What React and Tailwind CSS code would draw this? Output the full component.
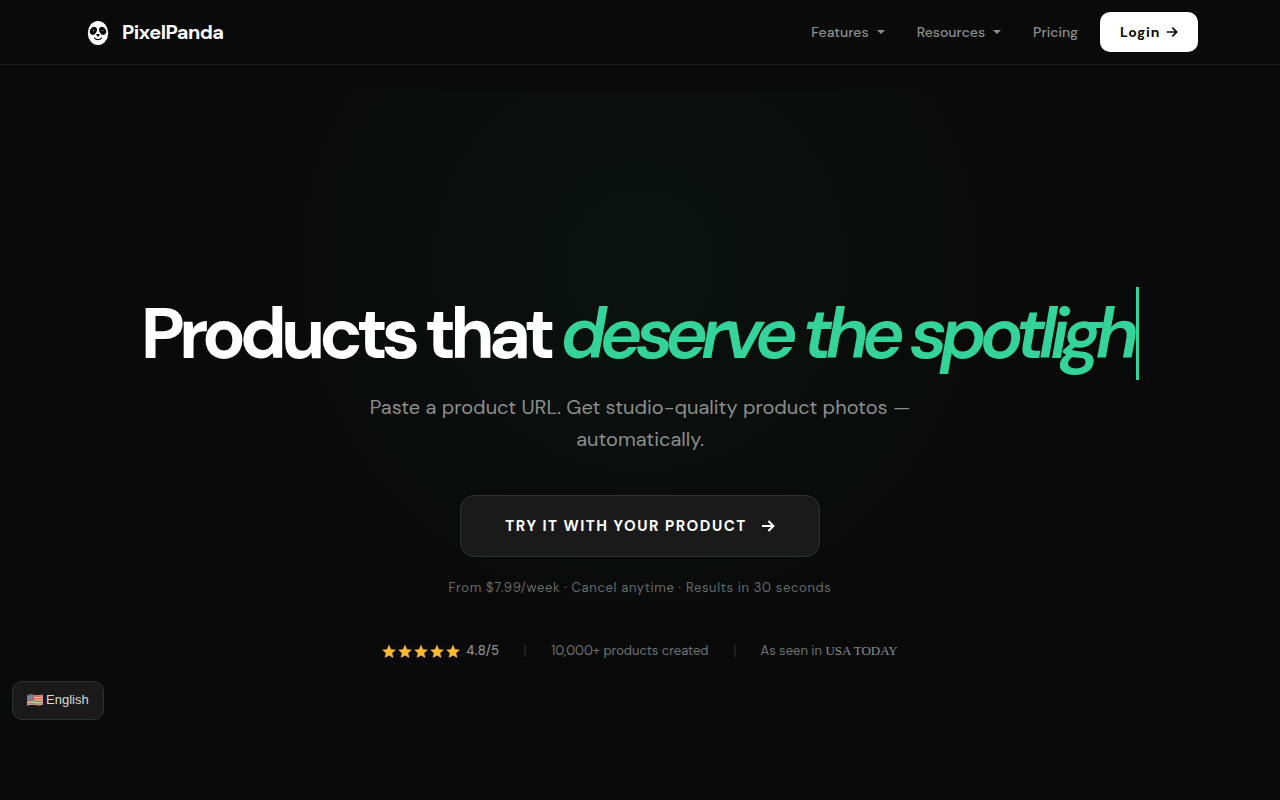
import React from 'react';

const navLinks = [
  { label: 'Features', menu: true },
  { label: 'Resources', menu: true },
  { label: 'Pricing', menu: false },
];

const PandaLogo = () => (
  <svg width="24" height="26" viewBox="0 0 24 26" aria-hidden="true">
    <ellipse cx="12" cy="14" rx="10.2" ry="12" fill="#fff" />
    <ellipse cx="7.4" cy="11.8" rx="3.3" ry="4.2" fill="#0a0a0a" transform="rotate(28 7.4 11.8)" />
    <ellipse cx="16.6" cy="11.8" rx="3.3" ry="4.2" fill="#0a0a0a" transform="rotate(-28 16.6 11.8)" />
    <circle cx="7.4" cy="11.4" r="0.5" fill="#fff" />
    <circle cx="16.8" cy="11.4" r="0.5" fill="#fff" />
    <path d="M10 15h4l-1.3 2.4h-1.4z" fill="#0a0a0a" />
    <path d="M8.4 19c1.6 2.2 5.6 2.2 7.2 0" stroke="#0a0a0a" strokeWidth="1.2" fill="none" strokeLinecap="round" />
  </svg>
);

const Caret = () => (
  <svg width="8" height="4" viewBox="0 0 8 4" fill="currentColor" aria-hidden="true">
    <path d="M0 0h8L4 4z" />
  </svg>
);

const Arrow = ({ size, weight }) => (
  <svg width={size} height={size} viewBox="0 0 14 14" fill="none" stroke="currentColor" strokeWidth={weight} aria-hidden="true">
    <path d="M1 7h11M7.4 2l5 5-5 5" />
  </svg>
);

const Star = () => (
  <svg width="14" height="14" viewBox="0 0 14 14" fill="#fbb92e" aria-hidden="true">
    <path d="M7 .6l2 4.7 5 .4-3.8 3.3 1.2 5L7 11.4 2.6 14l1.2-5L0 5.7l5-.4z" />
  </svg>
);

const Flag = () => (
  <svg width="16" height="12" viewBox="0 0 16 12" aria-hidden="true">
    <path d="M0 1.4c3-1.4 5-.9 8-.4s5 .4 8-.4v10c-3 1.2-5 .9-8 .4s-5-.6-8 .4z" fill="#cfc6bf" />
    <path
      d="M0 2.4c3-1.2 5-.9 8-.4s5 .4 8-.4M0 5c3-1.2 5-.9 8-.4s5 .4 8-.4M0 7.6c3-1.2 5-.9 8-.4s5 .4 8-.4M0 10.2c3-1.2 5-.9 8-.4s5 .4 8-.4"
      stroke="#cb6a45"
      strokeWidth="1.3"
      fill="none"
    />
    <path d="M0 1.4c3-1.4 5-.9 7-.5v5.6c-2-.4-4-.7-7 .5z" fill="#66788a" />
    <path d="M1 2.8h5M1 4.4h5" stroke="#a3afba" strokeWidth=".7" strokeDasharray=".9 .9" />
  </svg>
);

const Header = () => (
  <header className="border-b border-[#1c1c1c]">
    <div className="mx-auto flex h-16 max-w-[1116px] items-center justify-between">
      <a href="#home" className="flex items-center gap-3 pl-1 text-xl font-bold tracking-tight text-white">
        <PandaLogo />
        PixelPanda
      </a>
      <nav className="flex items-center text-sm text-[#8a8f8c]">
        <div className="mr-[22px] flex items-center gap-8 font-medium">
          {navLinks.map((link) =>
            link.menu ? (
              <button key={link.label} type="button" className="flex items-center gap-2">
                {link.label}
                <Caret />
              </button>
            ) : (
              <a key={link.label} href="#pricing">{link.label}</a>
            )
          )}
        </div>
        <a href="#login" className="flex h-10 items-center gap-1.5 rounded-[10px] bg-white px-5 font-bold tracking-wider text-[#0a0a0a]">
          Login
          <Arrow size={12} weight={2} />
        </a>
      </nav>
    </div>
  </header>
);

const Divider = () => <span className="h-3 w-0.5 bg-[#1f1f1f]" />;

const Hero = () => (
  <main className="relative flex flex-col items-center px-6 pt-[222px]">
    <div className="pointer-events-none absolute inset-x-0 top-[25px] h-[560px] bg-[radial-gradient(circle_360px_at_50%_175px,rgba(16,185,129,0.048),transparent)]" />
    <div className="relative flex w-full flex-col items-center text-center">
      <h1 className="text-7xl leading-[93px] font-bold tracking-[-6px] whitespace-nowrap text-white">
        Products that{' '}
        <span className="inline-block border-r-3 border-[#34d399] pr-1 font-semibold tracking-[-7px] text-[#34d399] italic">
          deserve the spotligh
        </span>
      </h1>
      <p className="mt-[11px] max-w-[560px] text-xl leading-8 text-[#8a8f8c]">
        Paste a product URL. Get studio-quality product photos — automatically.
      </p>
      <button
        type="button"
        className="mt-10 flex h-[62px] w-[360px] items-center justify-center gap-3.5 rounded-[14px] border border-[#2a3333] bg-[#1a1a1a] text-[15px] font-bold tracking-widest text-white uppercase"
      >
        Try it with your product
        <Arrow size={14} weight={2} />
      </button>
      <p className="mt-[21px] text-[13px] leading-5 tracking-wider text-[#666b69]">
        From $7.99/week · Cancel anytime · Results in 30 seconds
      </p>
      <div className="mt-[43px] flex items-center gap-[25px] text-[13px] leading-5 text-[#6d7371]">
        <div className="flex items-center gap-1.5">
          <div className="flex gap-0.5">
            {[1, 2, 3, 4, 5].map((n) => (
              <Star key={n} />
            ))}
          </div>
          <span className="font-medium tracking-wide text-[#8a8f8c]">4.8/5</span>
        </div>
        <Divider />
        <span>10,000+ products created</span>
        <Divider />
        <span>
          As seen in <span className="font-['Liberation_Serif',serif] text-[#8a8f8c]">USA TODAY</span>
        </span>
      </div>
    </div>
  </main>
);

const App = () => (
  <div className="min-h-screen bg-[#0a0a0a] font-['DM_Sans',Inter,sans-serif]">
    <Header />
    <Hero />
    <button
      type="button"
      className="fixed bottom-20 left-3 flex h-[39px] items-center gap-[3px] rounded-[10px] border border-[#2a3333] bg-[#1a1a1a] px-3.5 pb-0.5 font-['Liberation_Sans',sans-serif] text-[13px] text-[#d5dbd9]"
    >
      <Flag />
      English
    </button>
  </div>
);

export default App;
